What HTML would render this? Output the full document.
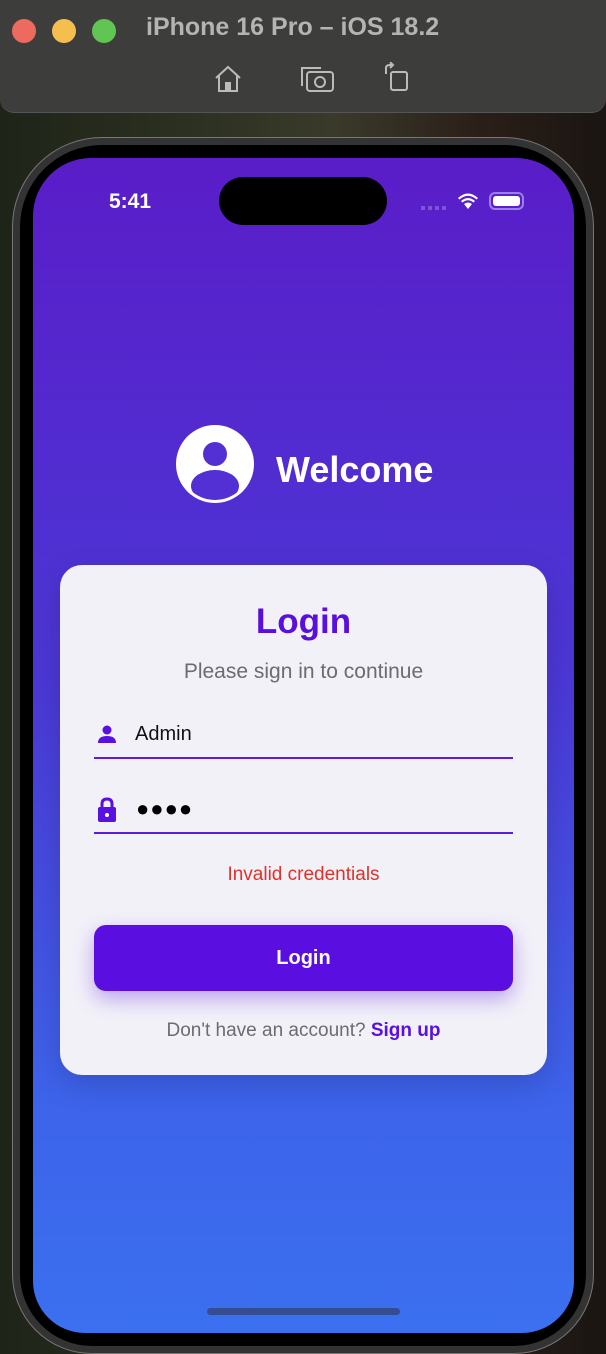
<!DOCTYPE html>
<html><head><meta charset="utf-8"><style>
*{margin:0;padding:0;box-sizing:border-box}
body{width:606px;height:1354px;overflow:hidden;position:relative;font-family:"Liberation Sans",sans-serif;background:linear-gradient(90deg,#1e2418 0%,#2b3020 30%,#3a3a2a 55%,#2a1e18 80%,#1a1512 100%)}
.tb{position:absolute;left:0;top:0;width:606px;height:113px;background:#3d3d3b;border-radius:0 0 14px 14px;border-bottom:1px solid #555}
.dot{position:absolute;top:19px;width:24px;height:24px;border-radius:50%}
.title{position:absolute;left:146px;top:13px;color:#b4b4b2;font-size:25px;font-weight:bold}
.phone{position:absolute;left:12px;top:137px;width:582px;height:1217px;border-radius:90px 90px 80px 80px;background:#333;border:1px solid #777}
.bez{position:absolute;left:7px;top:7px;right:7px;bottom:7px;background:#000;border-radius:82px 82px 72px 72px}
.scr{position:absolute;left:33px;top:158px;width:541px;height:1175px;border-radius:58px 58px 52px 52px;background:linear-gradient(180deg,#5a1dc8 0%,#4b38d6 45%,#3d63ea 80%,#3b70f0 100%);overflow:hidden}
.island{position:absolute;left:186px;top:19px;width:168px;height:48px;border-radius:24px;background:#000}
.time{position:absolute;left:76px;top:32px;color:#fff;font-size:21px;font-weight:bold}
.card{position:absolute;left:27px;top:407px;width:487px;height:510px;border-radius:22px;background:#f2f1f8;box-shadow:0 10px 30px rgba(0,0,0,.15)}
.c{position:absolute;left:0;width:100%;text-align:center}
.line{position:absolute;left:34px;width:419px;height:2px;background:#5a1de0}
.btn{position:absolute;left:34px;top:360px;width:419px;height:66px;border-radius:12px;background:#5a0ee0;color:#fff;font-weight:bold;font-size:20px;text-align:center;line-height:66px;box-shadow:0 8px 20px rgba(90,14,224,.35)}
</style></head><body>
<div class="tb">
<div class="dot" style="left:12px;background:#ec6a5e"></div>
<div class="dot" style="left:52px;background:#f4bf4f"></div>
<div class="dot" style="left:92px;background:#61c554"></div>
<div class="title">iPhone 16 Pro – iOS 18.2</div>
<svg style="position:absolute;left:212px;top:64px" width="32" height="30" viewBox="0 0 32 30" fill="none" stroke="#bbb" stroke-width="2"><path d="M4 14 L16 3 L28 14 M7 11 V27 H25 V11 M14 27 V19 H18 V27"/><rect x="14" y="19" width="4" height="8" fill="#bbb"/></svg>
<svg style="position:absolute;left:299px;top:64px" width="38" height="30" viewBox="0 0 38 30" fill="none" stroke="#bbb" stroke-width="2"><path d="M3 22 V4 H22"/><rect x="8" y="8" width="26" height="19" rx="3"/><circle cx="21" cy="18" r="5"/></svg>
<svg style="position:absolute;left:382px;top:62px" width="30" height="32" viewBox="0 0 30 32" fill="none" stroke="#bbb" stroke-width="2"><path d="M4 12 V6 Q4 3 8 3 L11 3 M8 0 L11 3 L8 6"/><rect x="9" y="10" width="16" height="18" rx="2"/></svg>
</div>
<div class="phone"><div class="bez"></div></div>
<div class="scr">
<div class="island"></div>
<div class="time">5:41</div>
<div style="position:absolute;left:388px;top:48px;width:26px;height:4px;background:repeating-linear-gradient(90deg,#7a55d8 0 4px,transparent 4px 7px)"></div>
<svg style="position:absolute;left:424px;top:34px" width="22" height="18" viewBox="0 0 22 18" fill="#fff"><path d="M11 17 L7 12 Q11 9 15 12 Z M4 9 Q11 3 18 9 L16.5 10.5 Q11 6 5.5 10.5Z M1 6 Q11 -3 21 6 L19.5 7.5 Q11 0 2.5 7.5Z"/></svg>
<div style="position:absolute;left:456px;top:34px;width:35px;height:18px;border:2px solid #9a80e8;border-radius:6px;padding:2px"><div style="background:#fff;width:100%;height:100%;border-radius:3px"></div></div>
<svg style="position:absolute;left:143px;top:267px" width="78" height="78" viewBox="0 0 78 78"><defs><clipPath id="cp"><circle cx="39" cy="39" r="36"/></clipPath></defs><circle cx="39" cy="39" r="39" fill="#fff"/><circle cx="39" cy="29" r="12" fill="#5230d4"/><ellipse cx="39" cy="61" rx="24" ry="16" fill="#5230d4" clip-path="url(#cp)"/></svg>
<div style="position:absolute;left:243px;top:291px;color:#fff;font-size:36px;font-weight:bold">Welcome</div>
<div class="card">
<div class="c" style="top:37px;font-size:35px;font-weight:bold;color:#5a10dc">Login</div>
<div class="c" style="top:95px;font-size:21px;color:#6b6b70">Please sign in to continue</div>
<svg style="position:absolute;left:37px;top:160px" width="20" height="18" viewBox="0 0 20 18" fill="#5a10e0"><circle cx="10" cy="5" r="4.5"/><path d="M1 18 Q1 11 10 11 Q19 11 19 18Z"/></svg>
<div style="position:absolute;left:75px;top:158px;font-size:20px;color:#111">Admin</div>
<div class="line" style="top:192px"></div>
<svg style="position:absolute;left:37px;top:232px" width="20" height="26" viewBox="0 0 20 26" fill="#5a10e0"><path d="M5 11 V7 Q5 2 10 2 Q15 2 15 7 V11" fill="none" stroke="#5a10e0" stroke-width="3"/><rect x="1" y="10" width="18" height="15" rx="2"/><circle cx="10" cy="18" r="2" fill="#fff"/></svg>
<div style="position:absolute;left:76px;top:231px;font-size:22px;color:#000;letter-spacing:1px">●●●●</div>
<div class="line" style="top:267px"></div>
<div class="c" style="top:299px;font-size:19px;color:#e0322a">Invalid credentials</div>
<div class="btn">Login</div>
<div class="c" style="top:455px;font-size:19px;color:#6b6b70">Don't have an account? <b style="color:#5a10e0">Sign up</b></div>
</div>
<div style="position:absolute;left:174px;top:1150px;width:193px;height:7px;border-radius:4px;background:#344c90"></div>
</div>
</body></html>
